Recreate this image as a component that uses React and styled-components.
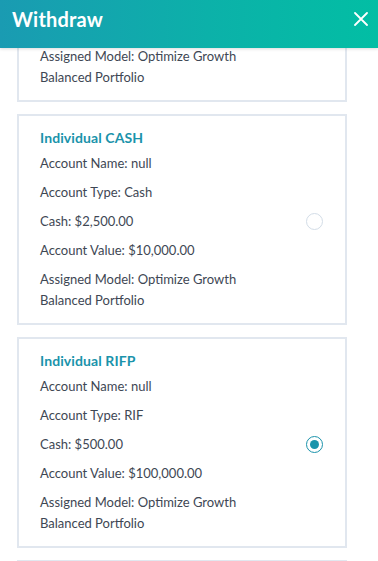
import React, { useEffect, useRef } from 'react'
import styled, { createGlobalStyle } from 'styled-components'

const GlobalStyle = createGlobalStyle`
    html, body {
        margin: 0;
        padding: 0;
        background: #ffffff;
    }
    * {
        box-sizing: border-box;
    }
`;

const Page = styled.div`
    width: 378px;
    height: 561px;
    display: flex;
    flex-direction: column;
    font-family: "Lato", "Open Sans", sans-serif;
    background: #ffffff;
    overflow: hidden;
`;

const Header = styled.header`
    height: 48px;
    flex-shrink: 0;
    display: flex;
    align-items: center;
    justify-content: space-between;
    padding: 0 10px 11px 12px;
    background: linear-gradient(90deg, #1a9bb2 0%, #0cb1a9 55%, #02bea4 100%);
    box-shadow: 0 1px 3px rgba(0, 0, 0, 0.15);
    z-index: 1;
`;

const Title = styled.h1`
    margin: 0;
    color: #ffffff;
    font-size: 20px;
    font-weight: 700;
    letter-spacing: 0.2px;
`;

const CloseButton = styled.button`
    border: none;
    background: none;
    padding: 0;
    width: 14px;
    height: 14px;
    display: flex;
    align-items: center;
    justify-content: center;
    cursor: pointer;
`;

const Scroller = styled.div`
    flex: 1;
    overflow-y: auto;
    scrollbar-width: none;
    &::-webkit-scrollbar {
        display: none;
    }
`;

const List = styled.div`
    display: flex;
    flex-direction: column;
    gap: 12px;
    padding: 16px 31px 16px 17px;
`;

const Card = styled.div`
    height: 211px;
    border: 2px solid #e1e7ef;
    padding: 13px 22px 0 21px;
    display: flex;
    flex-direction: column;
`;

const CardTitle = styled.div`
    color: #1a93ab;
    font-size: 14px;
    font-weight: 700;
    letter-spacing: 0.1px;
    line-height: 18px;
    margin-bottom: 6px;
`;

const Row = styled.div`
    display: flex;
    align-items: center;
    justify-content: space-between;
    color: #3e4754;
    font-size: 13px;
    line-height: 21px;
    margin-bottom: ${p => (p.$last ? '0' : '8px')};
`;

const Radio = styled.span`
    width: 17px;
    height: 17px;
    border-radius: 50%;
    border: 1.5px solid ${p => (p.$checked ? '#1a93ab' : '#d3dde7')};
    display: flex;
    align-items: center;
    justify-content: center;
    flex-shrink: 0;
    &::after {
        content: '';
        width: 9px;
        height: 9px;
        border-radius: 50%;
        background: ${p => (p.$checked ? '#1a93ab' : 'transparent')};
    }
`;

const accounts = [
    { title: 'Individual TFSA', type: 'TFSA', cash: '$1,000.00', value: '$25,000.00' },
    { title: 'Individual CASH', type: 'Cash', cash: '$2,500.00', value: '$10,000.00' },
    { title: 'Individual RIFP', type: 'RIF', cash: '$500.00', value: '$100,000.00', checked: true },
    { title: 'Individual RRSP', type: 'RRSP', cash: '$750.00', value: '$40,000.00' },
];

const AccountCard = ({ item }) => (
    <Card>
        <CardTitle>{item.title}</CardTitle>
        <Row>Account Name: null</Row>
        <Row>Account Type: {item.type}</Row>
        <Row>
            <span>Cash: {item.cash}</span>
            <Radio $checked={item.checked} />
        </Row>
        <Row>Account Value: {item.value}</Row>
        <Row $last>
            <span>Assigned Model: Optimize Growth<br />Balanced Portfolio</span>
        </Row>
    </Card>
);

const App = () => {
    const ref = useRef(null);
    useEffect(() => {
        if (ref.current) ref.current.scrollTop = 173;
    }, []);
    return (
        <Page>
            <GlobalStyle />
            <Header>
                <Title>Withdraw</Title>
                <CloseButton aria-label="Close">
                    <svg width="14" height="14" viewBox="0 0 14 14">
                        <path d="M1 1L13 13M13 1L1 13" stroke="#ffffff" strokeWidth="1.8" strokeLinecap="round" />
                    </svg>
                </CloseButton>
            </Header>
            <Scroller ref={ref}>
                <List>
                    {accounts.map(a => <AccountCard key={a.title} item={a} />)}
                </List>
            </Scroller>
        </Page>
    );
};

export default App
